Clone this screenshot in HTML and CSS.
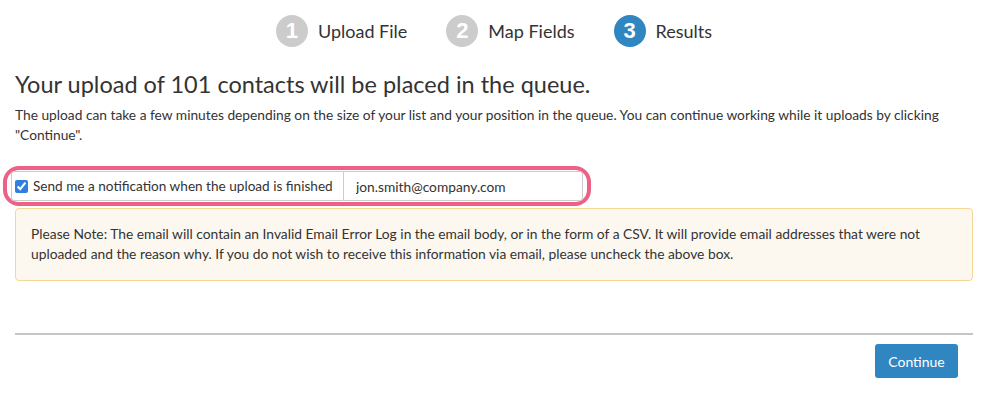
FILE: index.html
```html
<!DOCTYPE html>
<html>
<head>
<meta charset="utf-8">
<link rel="stylesheet" href="styles.css">
</head>
<body>
<div class="page">
  <ol class="steps">
    <li class="step"><span class="num">1</span><span class="label">Upload File</span></li>
    <li class="step"><span class="num">2</span><span class="label">Map Fields</span></li>
    <li class="step active"><span class="num">3</span><span class="label">Results</span></li>
  </ol>
  <h1 class="title">Your upload of 101 contacts will be placed in the queue.</h1>
  <p class="desc">The upload can take a few minutes depending on the size of your list and your position in the queue. You can continue working while it uploads by clicking "Continue".</p>
  <div class="highlight">
    <div class="group">
      <label class="check"><input type="checkbox" checked><span>Send me a notification when the upload is finished</span></label>
      <input class="email" type="text" value="jon.smith@company.com">
    </div>
  </div>
  <div class="note">Please Note: The email will contain an Invalid Email Error Log in the email body, or in the form of a CSV. It will provide email addresses that were not uploaded and the reason why. If you do not wish to receive this information via email, please uncheck the above box.</div>
  <hr class="rule">
  <div class="actions"><button class="btn">Continue</button></div>
</div>
</body>
</html>
```
FILE: styles.css
```css
* { box-sizing: border-box; }
html, body { margin: 0; padding: 0; background: #fff; }
body { font-family: Lato, "Open Sans", sans-serif; color: #333; }
.page { padding: 0 15px; }
.steps {
  list-style: none; margin: 0; padding: 15px 0 0;
  display: flex; justify-content: center; gap: 39px;
}
.step { display: flex; align-items: center; gap: 10px; height: 32px; }
.num {
  width: 32px; height: 32px; border-radius: 50%;
  background: #cccccc; color: #fff;
  display: flex; align-items: center; justify-content: center;
  font-size: 22px; font-weight: 700; font-family: "Liberation Sans", Arial, sans-serif;
}
.step.active .num { background: #2f86c1; }
.label { font-size: 18px; color: #333; }
.title {
  font-size: 23.5px; font-weight: 400; margin: 22px 0 0; line-height: 30px; color: #333;
}
.desc { font-size: 13.75px; line-height: 20px; margin: 6px 0 0; color: #333; }
.highlight {
  margin: 21px 0 0 -12px; width: 588px;
  border: 4px solid #ec6286; border-radius: 16px;
  padding: 1px 4px;
}
.group { display: flex; height: 30px; }
.check {
  display: flex; align-items: center; gap: 5px;
  border: 1px solid #ccc; border-right: none; border-radius: 3px 0 0 3px;
  padding: 0 8px 0 3px; font-size: 13.6px; width: 332px; white-space: nowrap;
  background: #fff;
}
.check input { margin: 0; width: 13px; height: 13px; accent-color: #2f7fe0; }
.email {
  flex: 1; border: 1px solid #ccc; border-radius: 0 3px 3px 0;
  font: 13.75px Lato, sans-serif; color: #333; padding: 0 12px;
}
.note {
  margin-top: 2px; background: #fcf8f0; border: 1px solid #f7d594; border-radius: 4px;
  padding: 15px 15px 16px; font-size: 13.8px; line-height: 20px; color: #333;
}
.rule { border: 0; border-top: 2px solid #c6c6c6; margin: 52px 0 0; }
.actions { display: flex; justify-content: flex-end; padding: 9px 15px 0 0; }
.btn {
  background: #2f86c1; color: #fff; border: 0; border-radius: 3px;
  font: 14px Lato, sans-serif; width: 83px; height: 34px; padding: 0;
}
```
